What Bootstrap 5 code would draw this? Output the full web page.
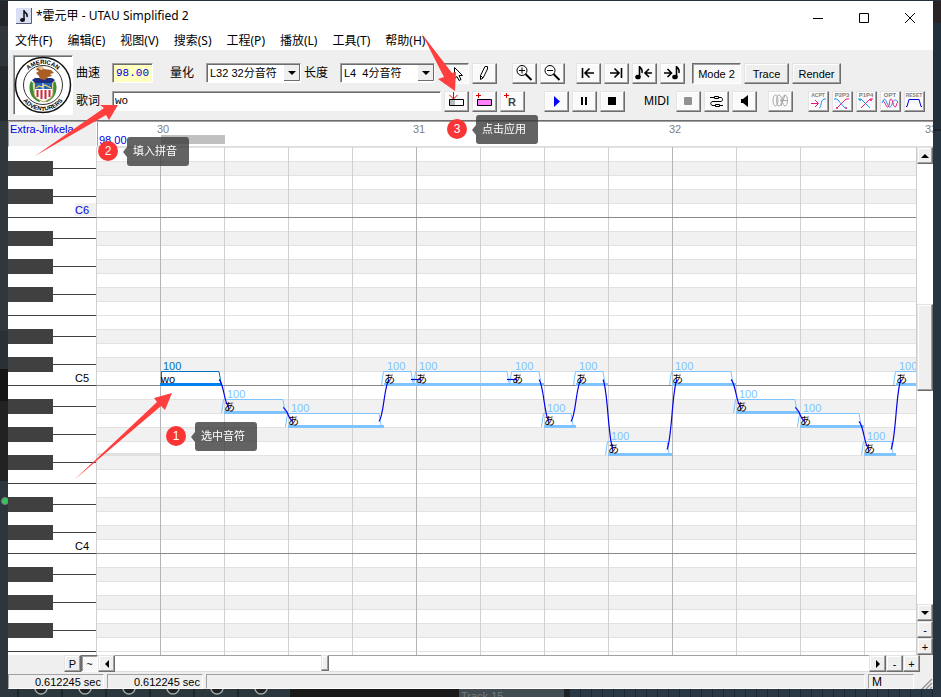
<!DOCTYPE html>
<html lang="zh-CN">
<head>
<meta charset="utf-8">
<meta name="viewport" content="width=device-width, initial-scale=1">
<title>*霍元甲 - UTAU Simplified 2</title>
<link href="https://cdn.jsdelivr.net/npm/bootstrap@5.3.0/dist/css/bootstrap.min.css" rel="stylesheet">
<style>
:root { --face:#efefef; --dark:#6d6d6d; --mid:#a0a0a0; }
body { font-family:"Liberation Sans","Noto Sans CJK SC",sans-serif; font-size:11px; line-height:14px; color:#000; background:#283038; }
.desk { height:100vh; min-height:400px; padding-top:1px; }
.edge-l { width:8px; background:linear-gradient(#23272b 0 25px,#2f363c 25px 65px,#24292d 65px 120px,#30383d 120px 330px,#2a3136 330px 368px,#151515 368px 400px,#222 400px 480px,#2c353b 480px); }
.edge-r { width:8px; background:linear-gradient(#2a2325 0 22px,#22303b 22px 128px,#1a242d 128px 130px,#263540 130px); }
.edge-b { height:8px; }
.titlebar { height:30px; padding-left:8px; font-family:"Noto Sans","Noto Sans CJK SC",sans-serif; font-size:12px; }
.titlebar .btn { width:46px; height:30px; padding:0; border:0; border-radius:0; }
.menubar { height:19px; font-family:"Noto Sans","Noto Sans CJK SC",sans-serif; font-size:12px; gap:15px; padding-left:7px; }
.menubar a { color:#000; text-decoration:none; line-height:19px; white-space:nowrap; }
.toolbar { height:70px; background:var(--face); padding:5px 0 0 5px; }
.sunken { border:1px solid; border-color:var(--mid) #fff #fff var(--mid); box-shadow:inset 1px 1px #6d6d6d; }
.emblem { width:60px; height:60px; background:#fff; }
.rows { gap:7px; padding:8px 0 0 3px; }
.bar { height:21px; gap:3px; }
.lbl { font-size:12px; line-height:20px; width:33px; white-space:nowrap; }
.field { height:20px; padding:0 3px; border-radius:0; font:11px/16px "Liberation Mono",monospace; background:#fff; outline:0; }
.bpm { width:41px; background:#ffffc0; color:#0000e6; text-align:right; margin-right:14px; }
.lyric { width:329px; padding:0 2px; }
.combo { width:95px; height:20px; background:#fff; }
.combo select { width:100%; height:18px; border:0; padding:0 18px 0 3px; background:transparent; appearance:none; font:11px/16px "Liberation Sans","Noto Sans CJK SC",sans-serif; color:#000; outline:0; }
.combo svg { right:0; top:1px; pointer-events:none; }
.bevel { padding:0; border-radius:0; border:1px solid; border-color:#e3e3e3 var(--dark) var(--dark) #e3e3e3; box-shadow:inset -1px -1px var(--mid), inset 1px 1px #fff; background:var(--face); color:#000; font-size:11px; line-height:12px; display:flex; align-items:center; justify-content:center; flex:none; }
.tool { width:25px; height:21px; background:#fafafa; }
.tool svg, .mini svg { flex:none; margin:-1px; }
.mini { width:21px; height:21px; background:#fafafa; }
.mini text { font:bold 6px "Liberation Sans",sans-serif; fill:#808080; text-anchor:middle; }
.mini .tiny { font-size:5px; }
.pressed { border-color:var(--dark) #fff #fff var(--dark); box-shadow:inset 1px 1px var(--mid); background:repeating-conic-gradient(#fff 0 25%,#f2f2f2 0 50%) 0 0/2px 2px; }
.word { height:21px; }
.w-mode { width:49px; } .w-word { width:45px; } .w-render { width:49px; }
.ml-a { margin-left:12px; } .ml-b { margin-left:8px; } .ml-c { margin-left:4px; } .ml-d { margin-left:16px; } .ml-e { margin-left:6px; }
.midi { font-size:12px; line-height:20px; width:29px; }
.ruler { height:27px; background:#fff; border-top:1px solid var(--dark); }
.voice { width:89px; background:var(--face); border:1px solid; border-color:var(--mid) #fff #fff var(--mid); color:#0000e6; padding-left:1px; overflow:hidden; white-space:nowrap; }
.timeline { box-shadow:inset 1px 1px var(--mid); border-bottom:1px solid #ddd; }
svg text { font-family:"Liberation Sans","Noto Sans CJK SC",sans-serif; }
.editor { min-height:0; }
.keys { width:88px; background:#fff; overflow:hidden; }
.roll { background:#fff; overflow:hidden; min-width:0; }
.roll svg, .keys svg, .timeline svg { display:block; width:100%; height:100%; }
.vbar { width:17px; background:#fff; border-left:1px solid #ccc; }
.sb { width:16px; height:17px; }
.vthumb { width:16px; height:87px; }
.space-a { flex:141 1 0; } .space-b { flex:214 1 0; }
.hbar { height:17px; background:var(--face); padding:0 13px 0 56px; }
.hbar .sb { width:17px; }
.track { background:#fff; border-top:1px solid var(--mid); border-bottom:1px solid #ddd; }
.hthumb { width:8px; height:16px; }
.t-a { flex:205 1 0; } .t-b { flex:539 1 0; }
.status { height:17px; gap:3px; background:var(--face); padding-top:2px; }
.panel { border:1px solid; border-color:var(--mid) #fff #fff var(--mid); padding-right:2px; text-align:right; line-height:14px; white-space:nowrap; }
.p-time { width:96px; } .p-mode { width:46px; padding-left:3px; text-align:left; font-size:12px; }
.overlay { left:0; top:0; width:100%; height:100%; pointer-events:none; }
.step { width:20px; height:20px; border-radius:50%; background:#fa3535; color:#fff; font-size:12px; line-height:20px; text-align:center; }
.tip { height:29px; padding:0 12px 0 6px; border-radius:3px; background:rgba(60,60,60,.8); color:#fff; line-height:28px; white-space:nowrap; }
.tip::before { content:""; position:absolute; left:-4px; top:10px; border:solid transparent; border-width:5px 4px 5px 0; border-right-color:rgba(60,60,60,.8); }
.s1 { left:166px; top:426px; } .t1 { left:195px; top:422px; }
.s2 { left:98px; top:141px; } .t2 { left:127px; top:137px; }
.s3 { left:447px; top:119px; } .t3 { left:476px; top:115px; }
</style>
<script src="https://cdn.jsdelivr.net/npm/bootstrap@5.3.0/dist/js/bootstrap.bundle.min.js"></script>
</head>
<body class="overflow-hidden">
<div class="desk d-flex flex-column position-relative">
  <div class="d-flex flex-fill editor">
    <div class="edge-l flex-shrink-0"></div>
    <main class="d-flex flex-column flex-fill bg-white overflow-hidden">
      <header class="titlebar d-flex align-items-center flex-shrink-0">
        <svg width="16" height="16" aria-hidden="true"><rect width="16" height="16" fill="#d9dff5"/><path d="M0 15.500H15.500V0" fill="none" stroke="#555b78"/><path d="M8 2v10M8 3c1 2 4 2 3 6" fill="none" stroke="#111" stroke-width="1.500"/><ellipse cx="6.500" cy="12" rx="2.500" ry="2" fill="#111"/></svg>
        <span class="ms-1 me-auto">*霍元甲 - UTAU Simplified 2</span>
        <button class="btn" type="button" aria-label="最小化"><svg width="12" height="12"><path d="M1 6.500h10" stroke="#000"/></svg></button>
        <button class="btn" type="button" aria-label="最大化"><svg width="12" height="12"><path d="M1.500 1.500h9v9h-9z" fill="none" stroke="#000"/></svg></button>
        <button class="btn" type="button" aria-label="关闭"><svg width="12" height="12"><path d="M1 1l10 10M11 1L1 11" stroke="#000"/></svg></button>
      </header>
      <nav class="menubar d-flex flex-shrink-0">
        <a href="#">文件(F)</a><a href="#">编辑(E)</a><a href="#">视图(V)</a><a href="#">搜索(S)</a><a href="#">工程(P)</a><a href="#">播放(L)</a><a href="#">工具(T)</a><a href="#">帮助(H)</a>
      </nav>
      <section class="toolbar d-flex flex-shrink-0">
        <div class="emblem sunken flex-shrink-0">
          <svg width="58" height="58" viewBox="0 0 58 58" role="img" aria-label="emblem">
            <circle cx="29" cy="29" r="27.500" fill="#fff" stroke="#111" stroke-width="1.500"/>
            <circle cx="29" cy="29" r="19.500" fill="#fff" stroke="#333"/>
            <path id="arcTop" d="M8 29a21 21 0 0 1 42 0" fill="none"/><path id="arcBot" d="M3.500 29a25.500 25.500 0 0 0 51 0" fill="none"/>
            <text font-size="6" font-weight="bold"><textPath href="#arcTop" startOffset="50%" text-anchor="middle">AMERICAN</textPath></text>
            <text font-size="6" font-weight="bold"><textPath href="#arcBot" startOffset="50%" text-anchor="middle">ADVENTURERS</textPath></text>
            <path d="M17 25c-4 8 0 18 8 21l3-2c-7-4-10-10-9-17zM41 25c4 8 0 18-8 21l-3-2c7-4 10-10 9-17z" fill="#3e8a35"/>
            <path d="M20 26h19v11c0 5-5 7-9.500 9C25 44 20 42 20 37z" fill="#fff" stroke="#b8a04a"/>
            <path d="M21 26h17v7H21z" fill="#2865b8"/><path d="M23.500 34v7M27.500 34v9M31.500 34v9M35.500 34v7" stroke="#c9273a" stroke-width="2"/>
            <path d="M22 32l3-2 3 1 3-2 6 3" fill="none" stroke="#e8d15a" stroke-width="1.200"/><path d="M29 26v7" stroke="#fff"/>
            <path d="M21 22h17l3 2-3 3H21l-3-3z" fill="#1d2d80"/>
            <path d="M23 12l5-2 2 3 7 1 3 3-4 1 2 2-4 1-3 3-5-1-1-3-3-3 3-2-3-1z" fill="#a85e24"/><path d="M24 12l4-2 2 3-3 1z" fill="#e6c890"/>
          </svg>
        </div>
        <div class="rows d-flex flex-column">
          <div class="bar d-flex">
            <label class="lbl" for="bpm">曲速</label>
            <input class="field bpm sunken" id="bpm" value="98.00">
            <label class="lbl" for="quant">量化</label>
            <div class="combo sunken position-relative"><select id="quant"><option>L32 32分音符</option></select><svg class="position-absolute" width="16" height="16" aria-hidden="true"><path d="M0 0h16v16H0z" fill="#efefef"/><path d="M0 15.500h15.500V0" fill="none" stroke="#6d6d6d"/><path d="M4 6h8l-4 4z"/></svg></div>
            <label class="lbl" for="len">长度</label>
            <div class="combo sunken position-relative"><select id="len"><option>L4&nbsp; 4分音符</option></select><svg class="position-absolute" width="16" height="16" aria-hidden="true"><path d="M0 0h16v16H0z" fill="#efefef"/><path d="M0 15.500h15.500V0" fill="none" stroke="#6d6d6d"/><path d="M4 6h8l-4 4z"/></svg></div>
            <button class="bevel tool pressed ml-e" type="button" aria-label="选择"><svg width="25" height="21"><path d="M10.500 4.500v11l2.500-2 2 4 2-1-2-4h3.500z" fill="#fff" stroke="#000"/></svg></button>
            <button class="bevel tool" type="button" aria-label="铅笔"><svg width="25" height="21"><path d="M8.500 16.500v-4l4.500-9h2.500v2.500L11 15zM8.500 12.500l2.500 2.500" fill="#fff" stroke="#000"/></svg></button>
            <button class="bevel tool ml-a" type="button" aria-label="放大"><svg width="25" height="21"><circle cx="10" cy="7.500" r="5" fill="none" stroke="#000"/><path d="M7 7.500h6M10 4.500v6" stroke="#000"/><path d="M13.500 11l6 6" stroke="#000" stroke-width="2"/></svg></button>
            <button class="bevel tool" type="button" aria-label="缩小"><svg width="25" height="21"><circle cx="10" cy="7.500" r="5" fill="none" stroke="#000"/><path d="M7 7.500h6" stroke="#000"/><path d="M13.500 11l6 6" stroke="#000" stroke-width="2"/></svg></button>
            <button class="bevel tool ml-b" type="button" aria-label="到开头"><svg width="25" height="21" fill="none" stroke="#000" stroke-width="1.600"><path d="M6.500 5v10M18 10H9M13.500 5.500L9 10l4.500 4.500"/></svg></button>
            <button class="bevel tool" type="button" aria-label="到结尾"><svg width="25" height="21" fill="none" stroke="#000" stroke-width="1.600"><path d="M17.500 5v10M6 10h9M10.500 5.500L15 10l-4.500 4.500"/></svg></button>
            <button class="bevel tool" type="button" aria-label="上一音符"><svg width="25" height="21" fill="none" stroke="#000" stroke-width="1.600"><path d="M7.500 3v11M8 4c1 2 3 2 2 6M20 10h-7M17 6l-4 4 4 4"/><ellipse cx="6" cy="14" rx="2" ry="1.500" fill="#000"/></svg></button>
            <button class="bevel tool" type="button" aria-label="下一音符"><svg width="25" height="21" fill="none" stroke="#000" stroke-width="1.600"><path d="M16.500 3v11M17 4c1 2 3 2 2 6M4 10h7M7.500 6l4 4-4 4"/><ellipse cx="15" cy="14" rx="2" ry="1.500" fill="#000"/></svg></button>
            <button class="bevel word pressed w-mode ml-c" type="button">Mode 2</button>
            <button class="bevel word w-word" type="button">Trace</button>
            <button class="bevel word w-render" type="button">Render</button>
          </div>
          <div class="bar d-flex">
            <label class="lbl" for="lyric">歌词</label>
            <input class="field lyric sunken" id="lyric" value="wo">
            <button class="bevel tool" type="button" aria-label="应用歌词"><svg width="25" height="21"><path d="M5.500 8.500h14v6h-14z" fill="#fff" stroke="#000"/><path d="M6 9h5v5H6z" fill="#bbb"/><path d="M9.500 1v7M5.500 4l4 4 4-4" fill="none" stroke="#e00000"/></svg></button>
            <button class="bevel tool" type="button" aria-label="插入音符"><svg width="25" height="21"><path d="M5.500 8.500h14v6h-14z" fill="#ff80ff" stroke="#000"/><path d="M6.500 2v5M4 4.500h5" stroke="#e00000"/></svg></button>
            <button class="bevel tool" type="button" aria-label="插入休止符"><svg width="25" height="21"><text x="8" y="15" font-size="11" font-weight="bold" fill="#444">R</text><path d="M6.500 2v5M4 4.500h5" stroke="#e00000"/></svg></button>
            <button class="bevel tool ml-d" type="button" aria-label="播放"><svg width="25" height="21"><path d="M10 5l6 5.500-6 5.500z" fill="#00f"/></svg></button>
            <button class="bevel tool" type="button" aria-label="暂停"><svg width="25" height="21"><path d="M9 6h2v8H9zM13 6h2v8h-2z"/></svg></button>
            <button class="bevel tool" type="button" aria-label="停止"><svg width="25" height="21"><path d="M8 6h8v8H8z"/></svg></button>
            <span class="midi ml-d">MIDI</span>
            <button class="bevel tool" type="button" aria-label="录音"><svg width="25" height="21"><rect x="8" y="6" width="8" height="8" rx="1" fill="#919191"/></svg></button>
            <button class="bevel tool" type="button" aria-label="连接"><svg width="25" height="21" fill="none" stroke="#000"><path d="M6 6.500h4M10.500 5.500h4v2h-4zM15 6.500h2c2 0 2 4 0 4H9c-3 0-3 4 0 4h2M11.500 13.500h4v2h-4zM16 14.500h3"/></svg></button>
            <button class="bevel tool" type="button" aria-label="声音"><svg width="25" height="21"><path d="M9 8h2l5-4v12l-5-4H9z"/></svg></button>
            <button class="bevel tool ml-b" type="button" aria-label="波形" disabled><svg width="25" height="21" fill="none" stroke="#a8a8a8"><ellipse cx="7.500" cy="9.500" rx="2.500" ry="5.500"/><ellipse cx="11" cy="9.500" rx="2.500" ry="5.500"/><ellipse cx="17" cy="9.500" rx="2.500" ry="5.500"/><path d="M13 15l4-11M12 9.500h8"/></svg></button>
            <button class="bevel mini ml-a" type="button" aria-label="ACPT"><svg width="21" height="21"><text class="tiny" x="10" y="6">ACPT</text><path d="M3 12.500h7M7 9l3.500 3.500L7 16" fill="none" stroke="#f0147d"/><path d="M11 17c3 0 1-8 5-9h2" fill="none" stroke="#1e90ff"/></svg></button>
            <button class="bevel mini" type="button" aria-label="P2P3"><svg width="21" height="21"><text x="10" y="6">P2P3</text><path d="M2 8h3l8 9" fill="none" stroke="#1e90ff"/><path d="M5 17L14 8h3" fill="none" stroke="#f0147d"/><circle cx="5" cy="17" r="1" fill="#f0147d"/><circle cx="14" cy="17" r="1" fill="#f0147d"/></svg></button>
            <button class="bevel mini" type="button" aria-label="P1P4"><svg width="21" height="21"><text x="10" y="6">P1P4</text><path d="M2 8h3l9 9" fill="none" stroke="#1e90ff"/><path d="M5 17L14 8h3" fill="none" stroke="#f0147d"/><circle cx="4" cy="9" r="1" fill="#1e90ff"/><circle cx="15" cy="9" r="1" fill="#f0147d"/></svg></button>
            <button class="bevel mini" type="button" aria-label="OPT"><svg width="21" height="21"><text x="10" y="6">OPT</text><path d="M2 12c2-5 3-5 5 0s3 6 5 1 3-5 6-2" fill="none" stroke="#1e90ff"/><path d="M3 10c2 0 3 7 5 6s1-8 3-8 2 8 4 8 1-4 3-5" fill="none" stroke="#f0147d"/></svg></button>
            <button class="bevel mini" type="button" aria-label="RESET"><svg width="21" height="21"><text class="tiny" x="10" y="6">RESET</text><path d="M2 15.500h1L5 8.500h10l2 7h1" fill="none" stroke="#00d"/></svg></button>
          </div>
        </div>
      </section>
      <section class="ruler d-flex flex-shrink-0">
        <div class="voice flex-shrink-0">Extra-Jinkela</div>
        <div class="timeline flex-fill overflow-hidden"><svg id="timeline"></svg></div>
      </section>
      <section class="editor d-flex flex-fill">
        <div class="keys flex-shrink-0"><svg id="keys"></svg></div>
        <div class="roll flex-fill"><svg id="roll"></svg></div>
        <div class="vbar d-flex flex-column flex-shrink-0">
          <button class="bevel sb" type="button" aria-label="向上"><svg width="8" height="4"><path d="M0 4h8L4 0z"/></svg></button>
          <div class="space-a"></div><div class="bevel vthumb"></div><div class="space-b"></div>
          <button class="bevel sb" type="button" aria-label="向下"><svg width="8" height="4"><path d="M0 0h8L4 4z"/></svg></button>
          <button class="bevel sb" type="button">-</button>
          <button class="bevel sb" type="button">+</button>
        </div>
      </section>
      <section class="hbar d-flex flex-shrink-0">
        <button class="bevel sb" type="button">P</button>
        <button class="bevel sb pressed" type="button">~</button>
        <button class="bevel sb" type="button" aria-label="向左"><svg width="4" height="8"><path d="M4 0v8L0 4z"/></svg></button>
        <div class="track t-a"></div><div class="bevel hthumb"></div><div class="track t-b"></div>
        <button class="bevel sb" type="button" aria-label="向右"><svg width="4" height="8"><path d="M0 0v8l4-4z"/></svg></button>
        <button class="bevel sb" type="button">-</button>
        <button class="bevel sb" type="button">+</button>
      </section>
      <footer class="status d-flex flex-shrink-0">
        <div class="panel p-time">0.612245 sec</div><div class="panel p-time">0.612245 sec</div>
        <div class="panel flex-fill"></div><div class="panel p-mode">M</div>
        <svg class="ms-1 mt-1" width="12" height="11" aria-hidden="true"><path d="M1 11L11 1M5 11l6-6M9 11l2-2" stroke="#999" stroke-width="1.500"/></svg>
      </footer>
    </main>
    <div class="edge-r flex-shrink-0"></div>
  </div>
  <svg class="edge-b w-100 flex-shrink-0 d-block" id="backdrop" aria-hidden="true"></svg>

  <svg class="overlay position-absolute" aria-hidden="true">
    <circle cx="5" cy="501" r="3.500" fill="#35c45a" stroke="#777" clip-path="inset(0 1px 0 0)"/>
    <g fill="#ff3e3e">
      <path d="M74 480L157 402l-3-4 18-5-7 17-4-4z"/>
      <path d="M35 156l69-48-4-3 18 0-9 15-3-5z"/>
      <path d="M422 34l30 39 4-1-1 19-17-12 6-2z"/>
    </g>
  </svg>
  <span class="step position-absolute s1">1</span><span class="tip position-absolute t1">选中音符</span>
  <span class="step position-absolute s2">2</span><span class="tip position-absolute t2">填入拼音</span>
  <span class="step position-absolute s3">3</span><span class="tip position-absolute t3">点击应用</span>
</div>
<script>
const ROW = 14, BEAT = 64, ORIGIN = 64, SPAN = 4000;
const byId = id => document.getElementById(id);
const rect = (x, y, w, h, f) => `<rect x="${x}" y="${y}" width="${w}" height="${h}" fill="${f}"/>`;
const text = (x, y, s, f, size = 11) => `<text x="${x}" y="${y}" fill="${f}" font-size="${size}">${s}</text>`;
const ROWS = Math.ceil(byId("keys").clientHeight / ROW);
// Row 0 is E6; semitone 0 is C
const semitone = r => ((4 - r) % 12 + 12) % 12;
const isBlack = r => [1, 3, 6, 8, 10].includes(semitone(r));

let keys = "", grid = "";
for (let r = 0; r < ROWS; r++) {
  const y = r * ROW, s = semitone(r);
  if (isBlack(r)) {
    keys += rect(0, y, 45, 15, "#404040") + rect(45, y + 7, 43, 1, "#404040");
    grid += rect(0, y, SPAN, ROW, "#f1f1f1");
  }
  grid += rect(0, y, SPAN, 1, "#e2e2e2");
  if (s === 0 || s === 5) keys += rect(0, y + ROW, 88, 1, "#404040");
  if (s === 0) {
    const octave = 6 - Math.floor(r / 12);
    if (octave === 6) keys += rect(67, y, 21, 13, "#f0f0f0");
    keys += text(67, y + 11, "C" + octave, octave === 6 ? "#0000e6" : "#000");
  }
}
for (let i = -1; i < 60; i++) grid += rect(ORIGIN + i * BEAT, 0, 1, 2000, i % 4 ? "#d0d0d0" : "#b4b4b4");
for (let r = 4; r < ROWS; r += 12) grid += rect(0, (r + 1) * ROW, SPAN, 1, "#888");
byId("keys").innerHTML = keys;

// [start, end, row, lyric], positions in eighth notes
const notes = [[0,2,16,"wo"],[2,4,18],[4,7,19],[7,8,16],[8,11,16],[11,12,16],[12,13,19],[13,14,16],[14,16,21],
  [16,18,16],[18,20,18],[20,22,19],[22,23,21],[23,26,16]];
let body = rect(0, 306, 64, 3, "#e0e0e0"), curves = "";
notes.forEach(([a, b, row, lyric], i) => {
  const s = ORIGIN + a * 32, e = ORIGIN + b * 32, t = row * ROW, on = i === 0, c = on ? "#0070c0" : "#80c4ff";
  const l = on ? s + 1 : s - 3, k = on ? s + 1 : s - 1;
  body += `<path d="M${l}.5 ${t + 14}L${k}.5 ${t}.5H${e - 5}L${e - 3} ${t + 12}" fill="none" stroke="${c}"/>`;
  body += rect(s, t + 12, e - s - (on ? 2 : 0), 3, on ? "#0080ee" : c);
  body += text(s + 3, t - 1, "100", c) + (lyric ? text(s + 1, t + 12, lyric, "#000") : text(s, t + 12, "あ", "#000"));
  const next = notes[i + 1];
  if (next) {
    const p = t + 8.5, n = next[2] * ROW + 8.5, d = (n - p) * 0.15;
    curves += `<path d="M${e - 5} ${p}C${e} ${p + d} ${e} ${n - d} ${e + 5} ${n}" fill="none" stroke="#0000e6" stroke-width="1.2"/>`;
  }
});
byId("roll").innerHTML = grid + body + curves;

let time = rect(64, 14, 64, 9, "#c0c0c0") + text(2, 23, "98.00", "#0000e6");
for (let m = 0; 60 + m * 256 < byId("timeline").clientWidth; m++) time += text(60 + m * 256, 12, 30 + m, "#808080");
byId("timeline").innerHTML = time;

let back = rect(0, 0, 290, 8, "#2b363d") + rect(290, 0, 169, 8, "#1a1a1a") + rect(459, 0, 105, 8, "#434c50") + rect(564, 0, 6, 8, "#1c2225") + rect(570, 0, SPAN, 8, "#2a3844");
for (let x = 41; x < 270; x += 44) back += `<circle cx="${x}" cy="-1" r="6" fill="#222" stroke="#9aa" stroke-width="1.5"/>` + rect(x - 24, 0, 2, 8, "#1e262b");
for (let x = 580; x < 2000; x += 11) back += rect(x, 0, 1, 8, "#1b2630");
back += text(461, 11, "Track 15", "#727b80");
byId("backdrop").innerHTML = back;
const lyricBox = byId("lyric");
lyricBox.setSelectionRange(2, 2);
lyricBox.focus();
</script>
</body>
</html>
